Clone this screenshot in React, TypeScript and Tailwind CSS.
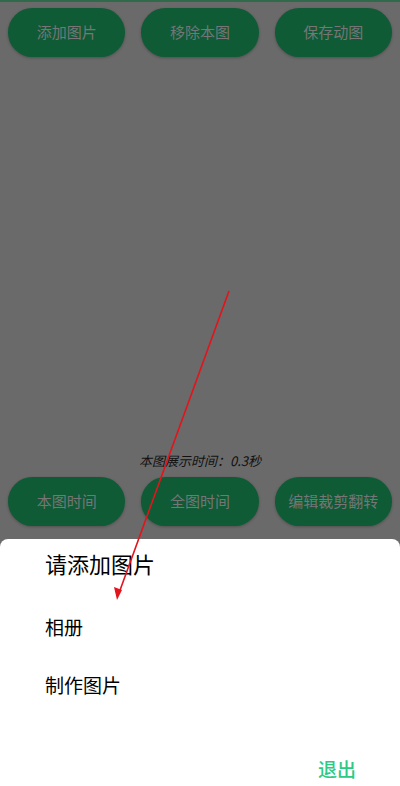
import React from "react";

const font = { fontFamily: '"Noto Sans CJK SC", "Noto Sans", sans-serif' };

const topButtons = ["添加图片", "移除本图", "保存动图"];
const bottomButtons = ["本图时间", "全图时间", "编辑裁剪翻转"];

const PillButton = ({ label }: { label: string }) => (
  <div className="flex-1 h-[49px] rounded-full bg-[#0e5b36] shadow-[0_1px_3px_rgba(0,0,0,0.25)] flex items-center justify-center text-[15px] text-[#767676]">
    {label}
  </div>
);

const App = () => {
  return (
    <div
      className="relative w-[400px] h-[786px] overflow-hidden bg-[#6a6a6a] flex flex-col border-t-2 border-[#2f6b4b]"
      style={font}
    >
      {/* top button row */}
      <div className="flex gap-4 px-2 pt-[6px]">
        {topButtons.map((b) => (
          <PillButton key={b} label={b} />
        ))}
      </div>

      <div className="flex-1" />

      <p className="text-center text-[13px] italic text-[#111] mb-[7px]">
        本图展示时间：0.3秒
      </p>

      {/* bottom button row */}
      <div className="flex gap-4 px-2 mb-[13px]">
        {bottomButtons.map((b) => (
          <PillButton key={b} label={b} />
        ))}
      </div>

      {/* sheet */}
      <div className="h-[247px] bg-white rounded-t-lg flex flex-col px-[45px]">
        <div className="text-[22px] text-black mt-[9px] leading-[30px]">请添加图片</div>
        <div className="text-[19px] text-black mt-[36px] leading-[26px]">相册</div>
        <div className="text-[19px] text-black mt-[32px] leading-[26px]">制作图片</div>
        <div className="flex-1" />
        <div className="flex justify-end mb-[4px]">
          <span className="text-[19px] text-[#2ec985] font-medium leading-[26px] mr-[-1px]">退出</span>
        </div>
      </div>

      {/* red annotation arrow */}
      <svg className="absolute inset-0 pointer-events-none" width="400" height="786">
        <line x1="229" y1="289" x2="119" y2="591" stroke="#e3141b" strokeWidth="1.6" />
        <polygon points="117,598 114,585 122,588" fill="#e3141b" />
      </svg>
    </div>
  );
};

export default App;
